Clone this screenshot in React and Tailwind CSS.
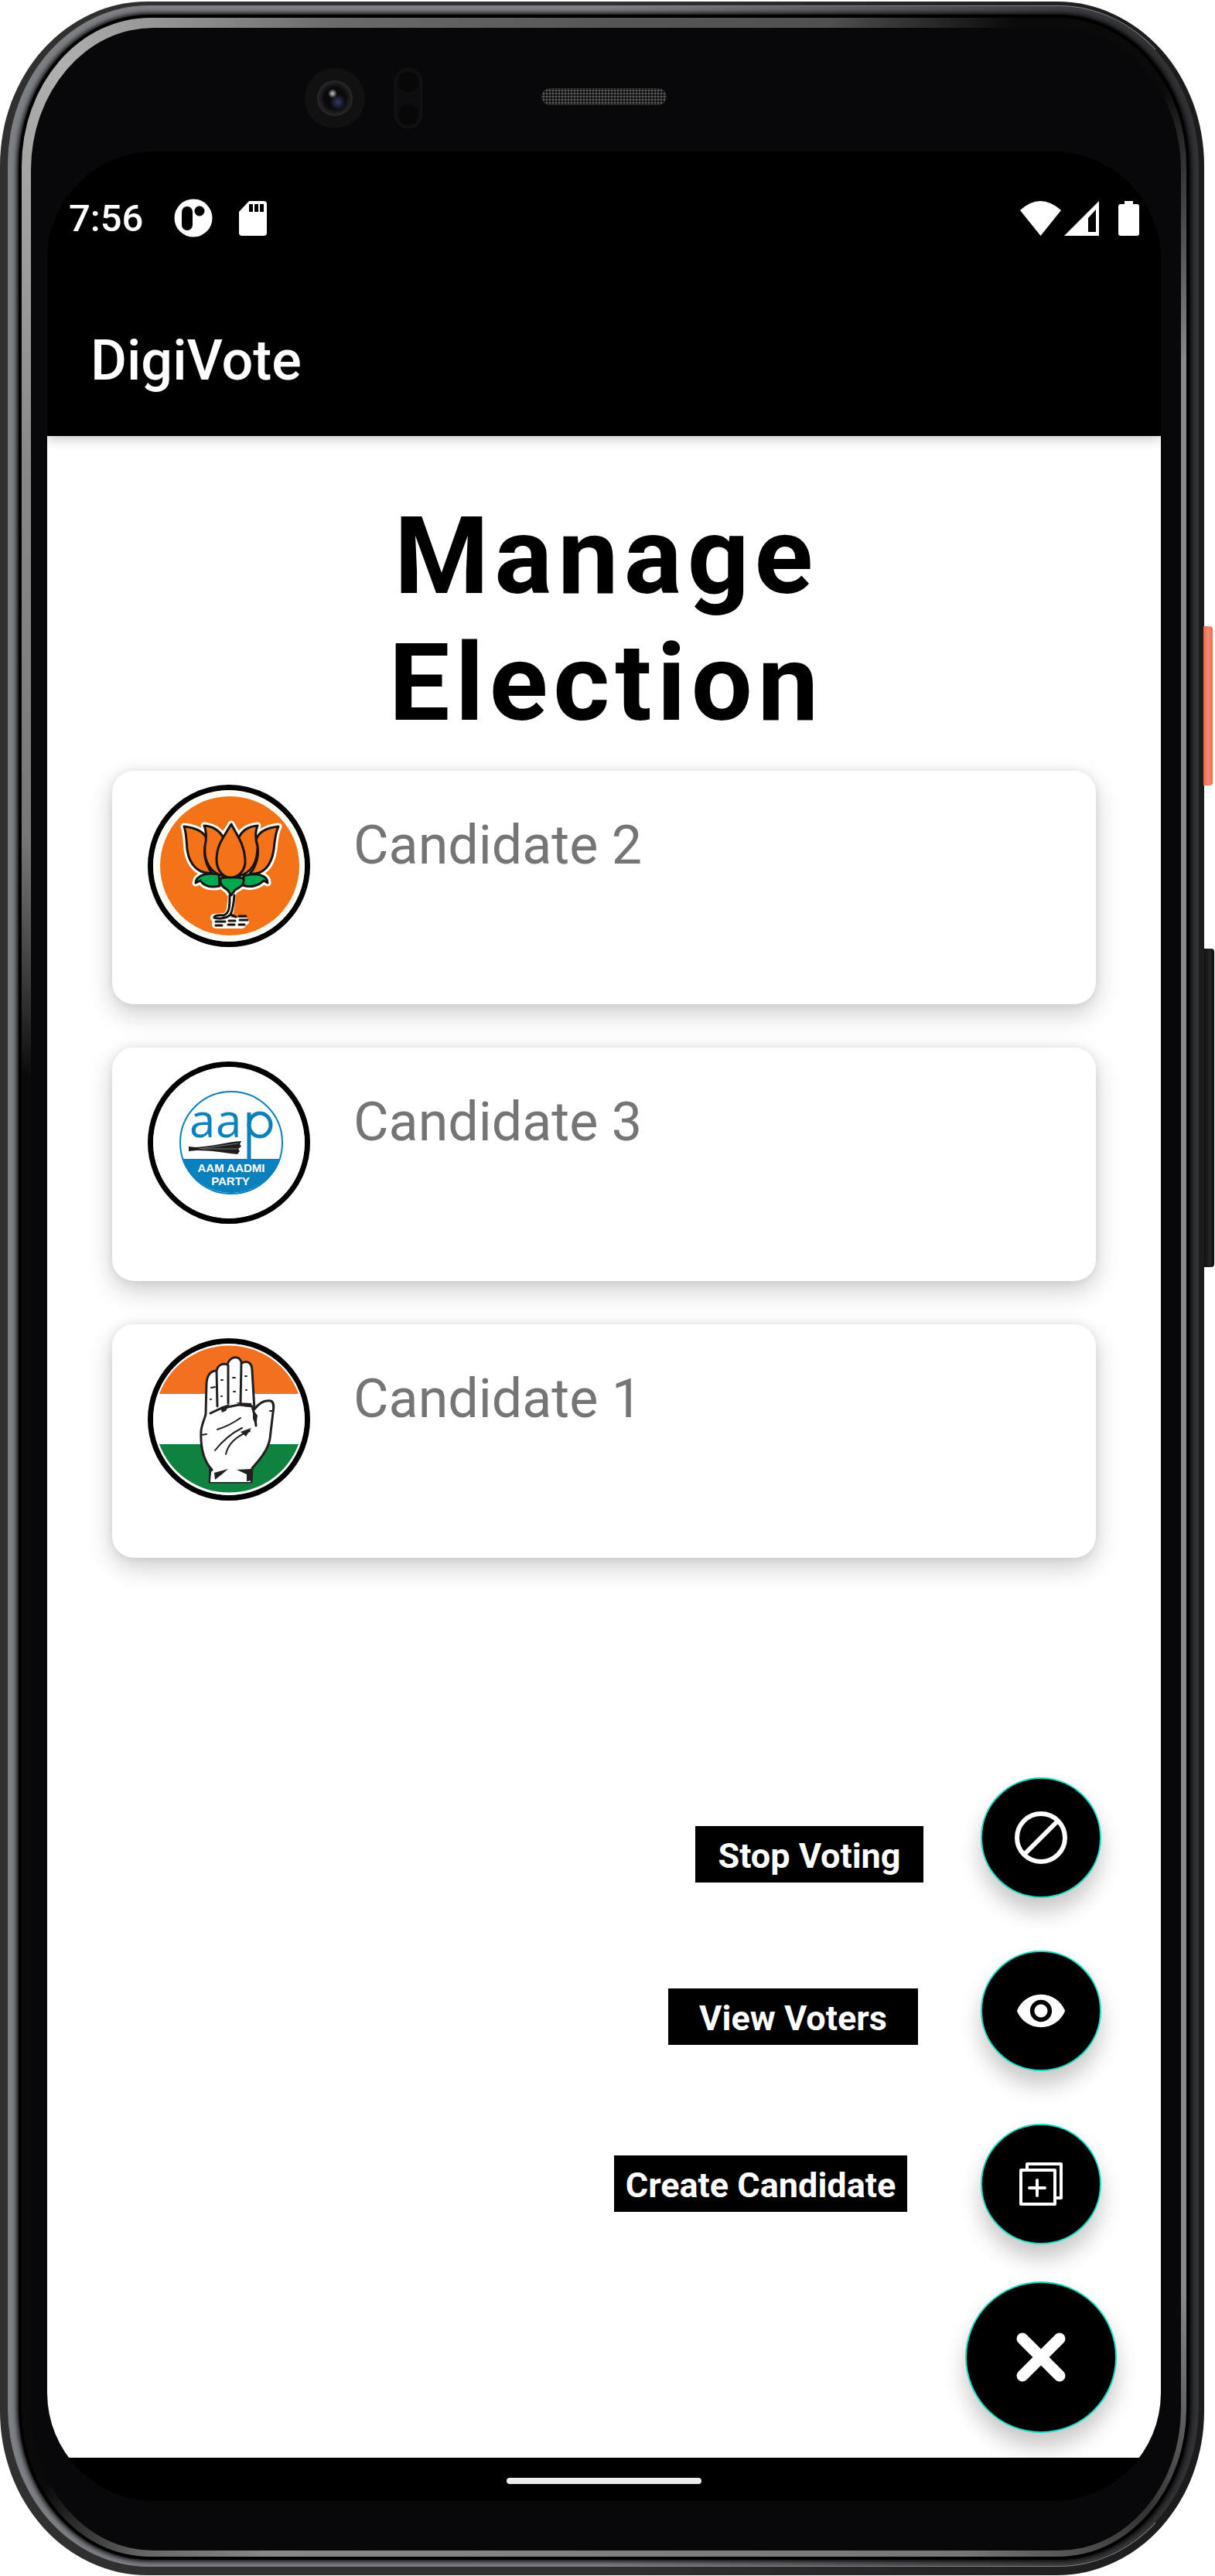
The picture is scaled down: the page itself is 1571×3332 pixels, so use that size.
import { MdVisibility } from "react-icons/md";

function BjpEmblem() {
  const petals = (
    <>
      <path d="M47 54 C66 56 76 64 76 72 C72 84 72 96 80 110 L83 114 C66 116 54 104 51 84 C50 72 50 62 47 54Z" />
      <path d="M169 54 C150 56 142 64 140 72 C144 84 144 96 136 110 L132 115 C150 117 160 104 163 84 C164 72 165 62 169 54Z" />
      <path d="M73 53 C86 54 94 60 99 71 C90 84 86 98 97 118 C82 114 72 100 74 80 C76 70 76 60 73 53Z" />
      <path d="M142 53 C130 54 121 60 117 70 C126 84 128 98 118 118 C134 114 142 100 142 80 C139 70 139 60 142 53Z" />
      <path d="M108 51 C98 68 89 78 89 97 C89 110 97 120 107 120 C118 120 127 110 126 97 C125 78 117 68 108 51Z" />
    </>
  );
  const leaves = (
    <>
      <path d="M62 127 C63 117 76 113 92 116 L93 131 C80 134 72 130 68 124Z" />
      <path d="M155 127 C155 117 140 113 124 118 L123 130 C134 134 144 130 150 124Z" />
      <path d="M94 121 C104 119 112 119 124 121 C125 130 120 132 113 136 L108 143 L103 136 C97 132 93 129 94 121Z" />
    </>
  );
  return (
    <svg viewBox="7 7 196 196" className="size-full" aria-hidden="true">
      <circle cx="105" cy="105" r="98" fill="#fdfdf8" />
      <circle cx="106" cy="105" r="90" fill="#f47318" />
      <g fill="#fff" stroke="#fffdf4" strokeWidth="9" strokeLinejoin="round">
        {petals}
        {leaves}
        <path d="M109 142 C107 160 108 168 99 171 L86 172 M88 177 H126 M88 181 H122" fill="none" strokeLinecap="round" strokeWidth="10" />
      </g>
      <g fill="#00a850" stroke="#141414" strokeWidth="3" strokeLinejoin="round">{leaves}</g>
      <g fill="#f47318" stroke="#141414" strokeWidth="3" strokeLinejoin="round">{petals}</g>
      <g fill="none" stroke="#141414" strokeWidth="3" strokeLinecap="round">
        <path d="M106 143 C106 158 106 166 98 169 C90 168 85 170 86 172 C92 174 101 173 106 169" />
        <path d="M112 143 C111 156 110 162 107 168 L114 171" />
        <path d="M118 170 H127 M88 177 H100 M105 176 H113 M119 175 H129 M88 182 H96 M104 181 H112 M118 181 H125" />
      </g>
    </svg>
  );
}

function AapEmblem() {
  return (
    <svg viewBox="7 7 196 196" className="size-full" role="img" aria-label="Aam Aadmi Party">
      <circle cx="105" cy="105" r="98" fill="#fff" />
      <circle cx="108" cy="105" r="66" fill="#fff" stroke="#0a80bd" strokeWidth="2" />
      <path d="M45 126 H171 A67 67 0 0 1 45 126Z" fill="#0a80bd" />
      <g fill="#0a80bd" fontFamily="'Open Sans', sans-serif" fontSize="60">
        <text x="54" y="98">a</text>
        <text x="88" y="98">a</text>
      </g>
      <g fill="none" stroke="#0a80bd" strokeWidth="5">
        <path d="M131 66 V126" />
        <ellipse cx="145" cy="82" rx="14" ry="15" />
      </g>
      <path d="M53 110 L62 111 C84 110 102 104 121 103 L119 107 L121 110 L117 113 L119 116 L116 120 C98 118 82 115 64 115 L53 116Z" fill="#1d1d1f" />
      <path d="M66 113 L117 106 M70 113 L116 113" stroke="#777" strokeWidth="1" />
      <g fill="#fff" textAnchor="middle" fontFamily="'Liberation Sans', sans-serif" fontWeight="700" fontSize="15">
        <text x="108" y="143">AAM AADMI</text>
        <text x="107" y="160">PARTY</text>
      </g>
    </svg>
  );
}

function CongressEmblem() {
  return (
    <svg viewBox="7 7 196 196" className="size-full" aria-hidden="true">
      <circle cx="105" cy="105" r="98" fill="#fff" />
      <path d="M15 72 A96 96 0 0 1 195 72Z" fill="#f37021" />
      <path d="M15 137 A96 96 0 0 0 195 137Z" fill="#10823f" />
      <path
        d="M80 186 L83 170 C72 158 68 140 69 120 C70 110 74 104 75 98 L76 58 C77 46 82 42 89 42 C91 34 97 32 103 34 C106 25 113 23 118 26 C121 29 121 31 122 32 C129 28 135 32 135 42 L138 92 C145 82 153 80 159 81 C164 83 163 90 162 96 L158 130 C155 146 144 158 135 168 L134 186Z"
        fill="#fff" stroke="#231f20" strokeWidth="3" strokeLinejoin="round"
      />
      <path d="M81 186 H133 V172 L115 170 L82 172Z" fill="#fff" />
      <g fill="none" stroke="#231f20" strokeWidth="3" strokeLinecap="round">
        <path d="M89 42 L90 88 M104 35 L104 84 M121 32 L120 84" />
        <path d="M81 97 L94 91 L118 86 L135 88 L139 103 L140 113" />
        <path d="M90 118 Q106 113 120 103 M87 145 Q102 126 122 116 M101 150 C104 136 116 126 132 120" strokeWidth="2" />
        <path d="M70 125 L76 124 M82 64 L87 63 M81 79 H82 M95 54 H97 M95 75 H96 M110 51 H113 M111 69 H113 M126 49 H128 M127 67 H128 M158 94 H161" strokeWidth="2" />
      </g>
      <path d="M94 89 L106 85 L101 94 L96 96Z M114 83 L134 84 L135 89 L124 88Z M136 92 L142 100 L140 114 L136 104Z M120 121 L134 116 L127 127Z M79 168 L83 170 L79 186Z M86 174 L104 169 L96 176 L87 183Z M115 170 L135 169 V184 L128 185 V176Z" fill="#231f20" />
    </svg>
  );
}

const candidates = [
  { name: "Candidate 2", Emblem: BjpEmblem },
  { name: "Candidate 3", Emblem: AapEmblem },
  { name: "Candidate 1", Emblem: CongressEmblem },
];

function StopIcon() {
  return (
    <svg viewBox="0 0 68 68" className="size-[68px]" fill="none" stroke="#fff" strokeWidth="6" aria-hidden="true">
      <circle cx="34" cy="34" r="31" />
      <path d="M12 56 L56 12" />
    </svg>
  );
}

function AddCopyIcon() {
  return (
    <svg viewBox="0 0 56 56" className="size-[56px]" fill="none" stroke="#fff" strokeWidth="4" strokeLinejoin="round" aria-hidden="true">
      <path d="M2 10 H46 V54 H2Z" />
      <path d="M10 10 V2 H54 V46 H46" />
      <path d="M23 23 V43 M13 33 H33" strokeLinecap="round" />
    </svg>
  );
}

const actions = [
  { label: "Stop Voting", icon: <StopIcon />, box: "mt-[63px] mr-[74px] w-[295px]" },
  { label: "View Voters", icon: <MdVisibility className="size-[68px]" />, box: "mt-[49px] mr-[81px] w-[323px]" },
  { label: "Create Candidate", icon: <AddCopyIcon />, box: "mt-[41px] mr-[95px] w-[379px]" },
];

function StatusBar() {
  return (
    <div className="flex h-[172px] items-center justify-between pr-7 pl-7 text-white">
      <div className="flex items-center">
        <time className="w-[136px] text-[49px] leading-none font-medium">7:56</time>
        <svg viewBox="0 0 50 50" className="mr-[34px] size-[50px]" aria-hidden="true">
          <circle cx="25" cy="25" r="24.5" fill="#fff" />
          <rect x="10" y="10" width="14" height="31" rx="7" fill="#000" />
          <circle cx="33" cy="16" r="6.5" fill="#000" />
        </svg>
        <svg viewBox="0 0 36 45" className="h-[45px] w-[36px]" aria-hidden="true">
          <path d="M13 0 H32 Q36 0 36 4 V41 Q36 45 32 45 H4 Q0 45 0 41 V14Z" fill="#fff" />
          <path d="M13 4 H18 V14 H13Z M20 4 H25 V14 H20Z M27 4 H32 V14 H27Z" fill="#000" />
        </svg>
      </div>
      <div className="flex items-center">
        <svg viewBox="0 0 53 45" className="mr-1 h-[45px] w-[53px]" aria-hidden="true">
          <path d="M0 12 Q26 -12 53 12 L26.500 45Z" fill="#fff" />
        </svg>
        <svg viewBox="0 0 45 45" className="mr-[25px] size-[45px]" aria-hidden="true">
          <path fillRule="evenodd" d="M45 0 V45 H0Z M41 11 L31 22 V40 H41Z" fill="#fff" />
        </svg>
        <svg viewBox="0 0 27 45" className="h-[45px] w-[27px]" aria-hidden="true">
          <path d="M8 0 H19 V4 H24 Q27 4 27 7 V42 Q27 45 24 45 H3 Q0 45 0 42 V7 Q0 4 3 4 H8Z" fill="#fff" />
        </svg>
      </div>
    </div>
  );
}

function Screen() {
  return (
    <div className="flex flex-1 flex-col overflow-hidden rounded-[140px] bg-black">
      <header className="relative flex h-[368px] shrink-0 flex-col bg-black shadow-[0_4px_14px_rgba(0,0,0,0.22)]">
        <StatusBar />
        <p className="flex flex-1 items-center pt-[2px] pl-14 text-[72px] leading-none font-medium text-white">DigiVote</p>
      </header>

      <main className="flex flex-1 flex-col bg-white">
        <h1 className="mx-auto w-[640px] pt-[73px] pl-[6px] text-center text-[140px] leading-[164px] font-bold tracking-[7px] text-black">
          Manage Election
        </h1>
        <ul className="mt-8 flex flex-col gap-14 px-[84px]">
          {candidates.map(({ name, Emblem }) => (
            <li key={name} className="flex h-[302px] items-start rounded-[28px] bg-white pt-[18px] pl-[46px] shadow-[0_12px_32px_rgba(0,0,0,0.2),0_0_12px_rgba(0,0,0,0.08)]">
              <div className="size-[210px] shrink-0 overflow-hidden rounded-full border-[7px] border-black">
                <Emblem />
              </div>
              <span className="mt-[37px] ml-14 text-[70px] leading-[82px] text-[#757575]">{name}</span>
            </li>
          ))}
        </ul>

        <div className="mt-auto flex flex-col items-end pt-20 pb-8">
          <div className="flex flex-col gap-[68px] pr-[77px]">
            {actions.map(({ label, icon, box }) => (
              <div key={label} className="flex items-start justify-end">
                <span id={label.replace(" ", "-")} className={`${box} h-[73px] bg-black pt-[12px] text-center text-[45px] leading-[53px] font-bold whitespace-nowrap text-white`}>
                  {label}
                </span>
                <button
                  type="button"
                  aria-labelledby={label.replace(" ", "-")}
                  className="flex size-[156px] shrink-0 items-center justify-center rounded-full border-2 border-[#14dcc4] bg-black text-white shadow-[0_18px_28px_rgba(0,0,0,0.22)]"
                >
                  {icon}
                </button>
              </div>
            ))}
          </div>
          <button
            type="button"
            aria-label="Close menu"
            className="mt-12 mr-[57px] flex size-[196px] items-center justify-center rounded-full border-2 border-[#14dcc4] bg-black shadow-[0_18px_28px_rgba(0,0,0,0.22)]"
          >
            <svg viewBox="0 0 64 64" className="size-[64px]" stroke="#fff" strokeWidth="15" strokeLinecap="round" aria-hidden="true">
              <path d="M8 8 L56 56 M56 8 L8 56" />
            </svg>
          </button>
        </div>
      </main>

      <nav className="flex h-14 shrink-0 items-center justify-center bg-black pt-1" aria-label="System navigation">
        <button type="button" aria-label="Home" className="h-2 w-[252px] rounded-full bg-[#ececec]" />
      </nav>
    </div>
  );
}

function TopBezel() {
  return (
    <div className="grid h-[160px] shrink-0 grid-cols-[1fr_162px_1fr] items-start" aria-hidden="true">
      <div className="flex items-start justify-end gap-[38px] pt-[52px] pr-[154px]">
        <svg viewBox="0 0 78 78" className="size-[78px]">
          <defs>
            <radialGradient id="lens">
              <stop offset="0" stopColor="#070709" />
              <stop offset="0.6" stopColor="#0a0a0c" />
              <stop offset="1" stopColor="#2a2a2c" />
            </radialGradient>
            <radialGradient id="glint">
              <stop offset="0" stopColor="#353d66" />
              <stop offset="1" stopColor="#353d66" stopOpacity="0" />
            </radialGradient>
            <radialGradient id="spark">
              <stop offset="0" stopColor="#c8c8cc" />
              <stop offset="1" stopColor="#c8c8cc" stopOpacity="0" />
            </radialGradient>
          </defs>
          <circle cx="39" cy="39" r="39" fill="#111112" />
          <circle cx="39" cy="39" r="23" fill="url(#lens)" />
          <circle cx="43" cy="44" r="10" fill="url(#glint)" />
          <circle cx="36" cy="33" r="6" fill="url(#spark)" />
        </svg>
        <svg viewBox="0 0 36 78" className="h-[78px] w-[36px]">
          <rect x="1" y="1" width="34" height="76" rx="17" fill="#0d0d0f" stroke="#131315" strokeWidth="2" />
          <circle cx="18" cy="18" r="13" fill="#070708" />
          <circle cx="18" cy="60" r="13" fill="#070708" />
        </svg>
      </div>
      <div className="mt-[78px] h-[22px] rounded-full border border-[#2c2c2c] bg-[#0b0b0b] bg-[radial-gradient(#5a5a5a_1px,transparent_2px)] bg-size-[4px_4px]" />
    </div>
  );
}

export default function App() {
  return (
    <div className="flex min-h-screen w-full bg-white pt-[2px] pr-[14px] pb-px font-['Roboto',sans-serif]">
      <div className="relative flex flex-1 rounded-[190px/212px] bg-[linear-gradient(to_right,#303030_50%,#1b1b1b)] pt-[5px] pr-[6px] pb-[11px] pl-[10px]">
        <div className="absolute top-[808px] -right-[11px] h-[206px] w-3 rounded-r-[4px] bg-[linear-gradient(to_right,#e8674a,#f58a70_50%,#ee6a4c)]" />
        <div className="absolute top-[1225px] -right-[13px] h-[412px] w-[13px] rounded-r-[4px] bg-[linear-gradient(to_right,#101010,#262626_60%,#080808)]" />
        <div className="flex flex-1 rounded-[182px/206px] border border-[#7e8084] border-r-[#1c1c1e] bg-[linear-gradient(to_right,#7c7f84_50%,#303236_96%)] pt-[11px] pr-3 pb-2 pl-[13px]">
          <div className="flex flex-1 rounded-[170px/196px] bg-black p-1 shadow-[0_0_6px_2px_#000]">
            <div className="flex flex-1 rounded-[166px/192px] bg-[conic-gradient(#565656_0deg,#505050_10deg,#0a0a0a_18deg,#0a0a0a_25deg,#888_32deg,#888_150deg,#333_156deg,#777_164deg,#888_195deg,#666_200deg,#0a0a0a_205deg,#0a0a0a_290deg,#777_308deg,#888_325deg,#b0b0b0_336deg,#6a6a6a_348deg,#565656_360deg)] pt-[13px] pr-[7px] pb-2 pl-3">
              <div className="flex flex-1 flex-col rounded-[158px/184px] bg-[#08080a] pr-[26px] pb-[64px] pl-[21px]">
                <TopBezel />
                <Screen />
              </div>
            </div>
          </div>
        </div>
      </div>
    </div>
  );
}
